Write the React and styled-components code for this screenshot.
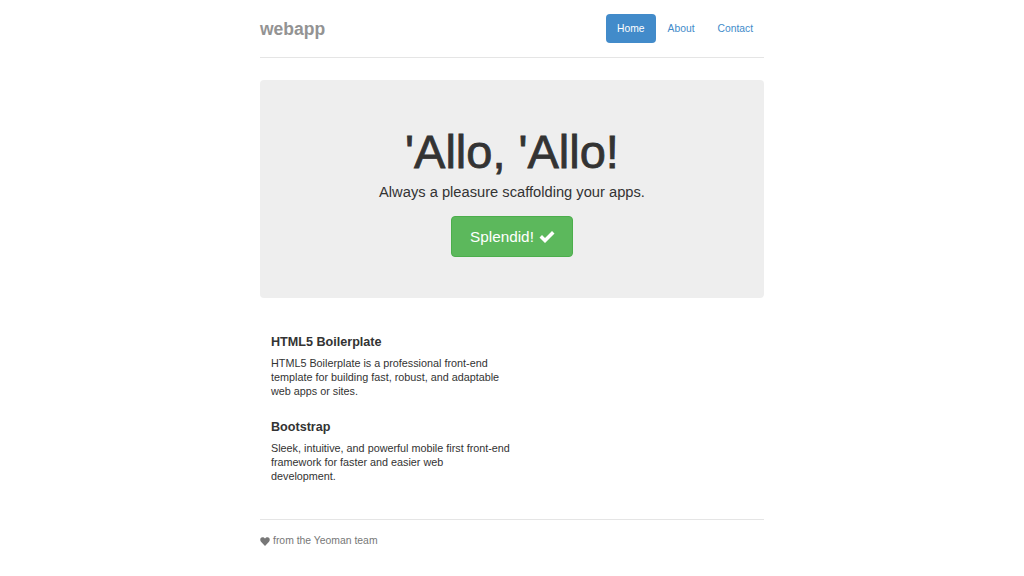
import React from "react";
import styled, { createGlobalStyle } from "styled-components";

const GlobalStyle = createGlobalStyle`
  body {
    margin: 0;
    background: #fff;
    font-family: "Liberation Sans", Arial, Helvetica, sans-serif;
    color: #333;
  }
`;

const Container = styled.div`
  width: 504px;
  margin: 0 auto;
`;

const Header = styled.header`
  display: flex;
  align-items: center;
  justify-content: space-between;
  padding: 14px 0 14px;
  border-bottom: 1px solid #e5e5e5;
`;

const Brand = styled.h3`
  margin: 0;
  font-size: 17.5px;
  font-weight: bold;
  color: #939393;
  line-height: 29px;
  padding-top: 1px;
  height: 29px;
  box-sizing: border-box;
`;

const Nav = styled.ul`
  display: flex;
  gap: 1px;
  list-style: none;
  margin: 0;
  padding: 0;
`;

const NavLink = styled.a`
  display: block;
  height: 29px;
  box-sizing: border-box;
  padding: 1px 11px 0;
  line-height: 28px;
  border-radius: 4px;
  font-size: 10.3px;
  text-decoration: none;
  color: ${(p) => (p.$active ? "#fff" : "#428bca")};
  background: ${(p) => (p.$active ? "#428bca" : "transparent")};
`;

const Jumbotron = styled.section`
  margin-top: 22px;
  background: #eeeeee;
  border-radius: 4px;
  padding: 45px 0 41px;
  display: flex;
  flex-direction: column;
  align-items: center;
  text-align: center;
`;

const Title = styled.h1`
  margin: 0;
  font-size: 47px;
  font-weight: normal;
  line-height: 53px;
  color: #333;
  -webkit-text-stroke: 0.8px #333;
`;

const Lead = styled.p`
  margin: 3px 0 13px;
  font-size: 14.7px;
  line-height: 22px;
  color: #333;
`;

const SuccessButton = styled.a`
  display: flex;
  align-items: center;
  gap: 5px;
  height: 41px;
  padding: 0 17px 0 18px;
  box-sizing: border-box;
  border-radius: 4px;
  background: #5cb85c;
  border: 1px solid #4cae4c;
  color: #fff;
  font-size: 15.3px;
  text-decoration: none;
`;

const Marketing = styled.div`
  display: grid;
  grid-template-columns: 1fr 1fr;
  padding: 37px 11px 0;
`;

const Column = styled.div`
  width: 240px;
`;

const Heading = styled.h4`
  margin: ${(p) => (p.$first ? "0" : "21px")} 0 7px;
  font-size: 12.6px;
  font-weight: bold;
  line-height: 14px;
  color: #333;
`;

const Text = styled.p`
  margin: 0;
  font-size: 10.8px;
  line-height: 14.2px;
  color: #333;
`;

const Footer = styled.footer`
  margin-top: 36px;
  border-top: 1px solid #e5e5e5;
  padding-top: 14px;
  display: flex;
  align-items: center;
  gap: 3px;
  font-size: 10.4px;
  line-height: 14px;
  color: #777;
`;

const HeartIcon = () => (
  <svg width="10" height="9" viewBox="0 0 20 18" aria-hidden="true">
    <path
      d="M10 18 L2 9.5 C-0.8 6.5 0.3 1 5 0.6 C7.4 0.4 9 1.8 10 3.4 C11 1.8 12.6 0.4 15 0.6 C19.7 1 20.8 6.5 18 9.5 Z"
      fill="#777"
    />
  </svg>
);

const CheckIcon = () => (
  <svg width="16" height="14" viewBox="0 0 16 14" aria-hidden="true">
    <path d="M0.5 7.5 L3 5 L6 8 L13 1 L15.5 3.5 L6 13 Z" fill="#fff" />
  </svg>
);

const App = () => {
  return (
    <Container>
      <GlobalStyle />
      <Header>
        <Brand>webapp</Brand>
        <Nav>
          <li>
            <NavLink href="#" $active>
              Home
            </NavLink>
          </li>
          <li>
            <NavLink href="#">About</NavLink>
          </li>
          <li>
            <NavLink href="#">Contact</NavLink>
          </li>
        </Nav>
      </Header>

      <Jumbotron>
        <Title>'Allo, 'Allo!</Title>
        <Lead>Always a pleasure scaffolding your apps.</Lead>
        <SuccessButton href="#">
          Splendid! <CheckIcon />
        </SuccessButton>
      </Jumbotron>

      <Marketing>
        <Column>
          <Heading $first>HTML5 Boilerplate</Heading>
          <Text>
            HTML5 Boilerplate is a professional front-end template for building
            fast, robust, and adaptable web apps or sites.
          </Text>
          <Heading>Bootstrap</Heading>
          <Text>
            Sleek, intuitive, and powerful mobile first front-end framework for
            faster and easier web development.
          </Text>
        </Column>
      </Marketing>

      <Footer>
        <HeartIcon />
        <span>from the Yeoman team</span>
      </Footer>
    </Container>
  );
};

export default App;
